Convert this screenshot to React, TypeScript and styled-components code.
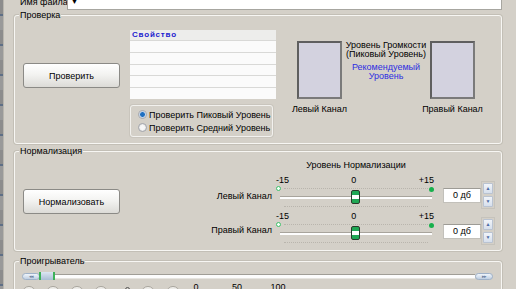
import { createGlobalStyle, styled } from "styled-components";

// base
const GlobalStyle = createGlobalStyle`
  html, body {
    margin: 0;
    padding: 0;
    background: #d4d0c8;
    overflow: hidden;
  }
  body {
    font-family: "Liberation Sans", Arial, sans-serif;
    font-size: 9px;
    color: #000;
  }
`;

const Window = styled.div`
  width: 516px;
  height: 289px;
  overflow: hidden;
  display: flex;
  background: #d4d0c8;
`;

const EdgeStrip = styled.div`
  width: 3px;
  flex: none;
  background: repeating-linear-gradient(
    180deg,
    #8c8c8c 0px,
    #8c8c8c 14px,
    #5f6f86 14px,
    #5f6f86 16px,
    #9a9a9a 16px,
    #9a9a9a 30px
  );
  border-right: 1px solid #b9b6ae;
`;

const Main = styled.div`
  flex: 1;
  display: flex;
  flex-direction: column;
`;

// file name row
const FileRow = styled.div`
  flex: none;
  display: flex;
  align-items: center;
  height: 16px;
  margin-top: -6px;
  padding-left: 16px;
`;

const FileLabel = styled.span`
  width: 47px;
  white-space: nowrap;
`;

const FileInput = styled.div`
  width: 435px;
  height: 15px;
  box-sizing: border-box;
  background: #fff;
  border: 1px solid #a7a6a0;
  border-top: none;
  display: flex;
  align-items: center;
  padding-left: 3px;
  font-size: 7px;
`;

// group box
const Group = styled.div<{ $h: number; $mt: number }>`
  flex: none;
  position: relative;
  box-sizing: border-box;
  height: ${(p) => p.$h}px;
  margin: ${(p) => p.$mt}px 14px 0 10px;
  border: 1px solid #f7f6f3;
  border-radius: 3px;
  box-shadow: 0 0 0 1px #c3bfb6;
  display: flex;
  align-items: flex-start;
`;

const Legend = styled.span`
  position: absolute;
  top: -7px;
  left: 4px;
  padding: 0 1px;
  background: #d4d0c8;
  line-height: 13px;
  white-space: nowrap;
`;

const XpButton = styled.div<{ $mt: number }>`
  flex: none;
  box-sizing: border-box;
  width: 97px;
  height: 25px;
  margin: ${(p) => p.$mt}px 0 0 8px;
  border: 1px solid #8b8a86;
  border-radius: 3px;
  background: linear-gradient(180deg, #ffffff 0%, #f3f3f1 45%, #dcdbd7 100%);
  display: flex;
  align-items: center;
  justify-content: center;
`;

// property list
const ListCol = styled.div`
  flex: none;
  width: 146px;
  margin: 14px 0 0 10px;
  display: flex;
  flex-direction: column;
`;

const PropTable = styled.div`
  height: 69px;
  display: grid;
  grid-template-rows: 10px repeat(5, 1fr);
  row-gap: 1px;
  background: #d9d9d7;
`;

const PropHeader = styled.div`
  background: #ededeb;
  color: #1c1ccf;
  font-weight: bold;
  font-size: 8px;
  letter-spacing: 0.8px;
  line-height: 10px;
  padding-left: 2px;
`;

const PropRow = styled.div`
  background: #fbfbfb;
`;

const RadioBox = styled.div`
  box-sizing: border-box;
  width: 143px;
  height: 32px;
  margin-top: 6px;
  border: 1px solid #f2f1ee;
  border-radius: 3px;
  box-shadow: 0 0 0 1px #c9c5bd;
  display: flex;
  flex-direction: column;
  justify-content: center;
  gap: 1px;
  padding-left: 7px;
`;

const RadioLine = styled.div`
  display: flex;
  align-items: center;
  gap: 2px;
  line-height: 12px;
  white-space: nowrap;
`;

const RadioDot = styled.span<{ $on?: boolean }>`
  flex: none;
  width: 9px;
  height: 9px;
  box-sizing: border-box;
  border-radius: 50%;
  border: 1px solid #a3a6ad;
  background: ${(p) =>
    p.$on
      ? "radial-gradient(circle, #1f6fc0 0 2px, #8fb6e3 2.5px, #eef1f5 3.5px)"
      : "radial-gradient(circle, #f7f7f7 0 2px, #dcdcdc 4px)"};
`;

// meters
const MeterArea = styled.div`
  flex: none;
  margin: 25px 0 0 21px;
  display: grid;
  grid-template-columns: 45px 88px 45px;
`;

const MeterCol = styled.div`
  display: flex;
  flex-direction: column;
  align-items: center;
  gap: 4px;
`;

const MeterBox = styled.div`
  width: 45px;
  height: 58px;
  box-sizing: border-box;
  border: 2px solid #5f5f5f;
  border-right-color: #7a7a7a;
  border-bottom-color: #7a7a7a;
  background: #d3d2df;
`;

const ChannelCaption = styled.span`
  white-space: nowrap;
  line-height: 13px;
`;

const CenterText = styled.div`
  display: flex;
  flex-direction: column;
  align-items: center;
  line-height: 9px;
  white-space: nowrap;
`;

const Blue = styled.div`
  color: #2d2ee0;
  display: flex;
  flex-direction: column;
  align-items: center;
  margin-top: 4px;
`;

// normalization
const LabelCol = styled.div`
  flex: none;
  width: 152px;
  margin-top: 38px;
  display: flex;
  flex-direction: column;
  align-items: flex-end;
  gap: 21px;
  line-height: 13px;
`;

const SliderCol = styled.div`
  flex: none;
  width: 160px;
  margin: 7px 0 0 4px;
  display: flex;
  flex-direction: column;
`;

const SliderTitle = styled.div`
  text-align: center;
  line-height: 13px;
  margin-bottom: 2px;
  white-space: nowrap;
`;

const ScaleRow = styled.div`
  display: flex;
  justify-content: space-between;
  width: 158px;
  line-height: 12px;
  height: 12px;
`;

const SliderBody = styled.div`
  position: relative;
  height: 24px;
`;

const TickLine = styled.div<{ $top: number }>`
  margin: ${(p) => p.$top}px 8px 0 8px;
  height: 0;
  border-top: 1px dotted #b9b5ad;
`;

const Track = styled.div`
  margin: 7px 4px 0 4px;
  height: 2px;
  background: #fdfdfd;
  border-top: 1px solid #a8a49c;
`;

const MarkHollow = styled.span`
  position: absolute;
  left: 0;
  top: 0;
  width: 5px;
  height: 5px;
  box-sizing: border-box;
  border-radius: 50%;
  border: 1px solid #3fbf6a;
  background: #f4fff6;
`;

const MarkFilled = styled.span`
  position: absolute;
  right: 2px;
  top: 1px;
  width: 5px;
  height: 5px;
  border-radius: 50%;
  background: #17b04c;
`;

const Thumb = styled.span`
  position: absolute;
  left: 75px;
  top: 4px;
  width: 9px;
  height: 14px;
  box-sizing: border-box;
  border: 1px solid #2a3a2c;
  border-radius: 2px;
  background: linear-gradient(
    180deg,
    #20a855 0 4px,
    #ffffff 4px 8px,
    #20a855 8px
  );
`;

const SpinCol = styled.div`
  flex: none;
  margin: 31px 0 0 7px;
  display: flex;
  flex-direction: column;
  gap: 12px;
`;

const Spin = styled.div`
  display: flex;
  align-items: center;
  height: 24px;
`;

const SpinInput = styled.div`
  width: 38px;
  height: 15px;
  box-sizing: border-box;
  background: #fff;
  border: 1px solid #c2c0ba;
  border-top-color: #9d9b95;
  display: flex;
  align-items: center;
  justify-content: center;
  line-height: 13px;
`;

const SpinButtons = styled.div`
  margin-left: 0;
  padding: 1px;
  border: 1px solid #c6c3bc;
  display: flex;
  flex-direction: column;
  gap: 2px;
`;

const SpinBtn = styled.span`
  width: 8px;
  height: 9px;
  border: 1px solid #b9c3d2;
  border-radius: 1px;
  background: linear-gradient(180deg, #f1f4f9, #d6dfec);
  color: #4f6ba5;
  font-size: 5px;
  line-height: 9px;
  text-align: center;
`;

// player
const SeekRow = styled.div`
  display: flex;
  align-items: center;
  height: 8px;
  margin: 10px 8px 0 7px;
`;

const Pill = styled.span`
  flex: none;
  width: 18px;
  height: 7px;
  box-sizing: border-box;
  border: 1px solid #9fb2c9;
  border-radius: 4px;
  background: linear-gradient(180deg, #f0f5fb, #bfcfe2);
  color: #6a7f9e;
  font-size: 5px;
  line-height: 5px;
  text-align: center;
  letter-spacing: -1px;
`;

const SeekTrack = styled.div`
  flex: 1;
  height: 5px;
  box-sizing: border-box;
  background: #fcfcfc;
  border-top: 1px solid #a09d96;
  border-bottom: 1px solid #e6e4df;
  display: flex;
  align-items: center;
`;

const SeekThumb = styled.span`
  width: 16px;
  height: 8px;
  margin-left: -1px;
  box-sizing: border-box;
  border-left: 2px solid #3db25a;
  border-right: 2px solid #3db25a;
  background: linear-gradient(180deg, #dbe6f2, #a9bdd4);
`;

const PlayerBody = styled.div`
  display: flex;
  flex-direction: column;
  width: 100%;
`;

const BottomRow = styled.div`
  display: flex;
  align-items: flex-start;
  margin: 1px 0 0 7px;
`;

const RoundBtn = styled.span<{ $ml: number }>`
  flex: none;
  width: 14px;
  height: 14px;
  margin: 5px 0 0 ${(p) => p.$ml}px;
  box-sizing: border-box;
  border-radius: 50%;
  border: 1px solid #a8a59e;
  background: linear-gradient(180deg, #f2f1ee, #cfcbc3);
`;

const SmallMark = styled.span`
  width: 3px;
  height: 3px;
  margin: 6px 0 0 17px;
  border-radius: 50%;
  border: 1px solid #555;
`;

const VolNum = styled.span<{ $ml: number }>`
  width: 20px;
  margin-left: ${(p) => p.$ml}px;
  text-align: center;
  line-height: 12px;
`;

const TimeText = styled.span`
  margin: 5px 29px 0 auto;
  color: #1f1fd6;
  letter-spacing: 0.7px;
  line-height: 12px;
`;

function Slider() {
  return (
    <>
      <ScaleRow>
        <span>-15</span>
        <span>0</span>
        <span>+15</span>
      </ScaleRow>
      <SliderBody>
        <MarkHollow />
        <MarkFilled />
        <TickLine $top={2} />
        <Track />
        <TickLine $top={7} />
        <Thumb />
      </SliderBody>
    </>
  );
}

function SpinBox() {
  return (
    <Spin>
      <SpinInput>0 дб</SpinInput>
      <SpinButtons>
        <SpinBtn>▲</SpinBtn>
        <SpinBtn>▼</SpinBtn>
      </SpinButtons>
    </Spin>
  );
}

export default function App() {
  return (
    <Window>
      <GlobalStyle />
      <EdgeStrip />
      <Main>
        <FileRow>
          <FileLabel>Имя файла:</FileLabel>
          <FileInput>▼</FileInput>
        </FileRow>

        <Group $h={129} $mt={5}>
          <Legend>Проверка</Legend>
          <XpButton $mt={47}>Проверить</XpButton>
          <ListCol>
            <PropTable>
              <PropHeader>Свойство</PropHeader>
              <PropRow />
              <PropRow />
              <PropRow />
              <PropRow />
              <PropRow />
            </PropTable>
            <RadioBox>
              <RadioLine>
                <RadioDot $on />
                Проверить Пиковый Уровень
              </RadioLine>
              <RadioLine>
                <RadioDot />
                Проверить Средний Уровень
              </RadioLine>
            </RadioBox>
          </ListCol>
          <MeterArea>
            <MeterCol>
              <MeterBox />
              <ChannelCaption>Левый Канал</ChannelCaption>
            </MeterCol>
            <CenterText>
              <span>Уровень Громкости</span>
              <span>(Пиковый Уровень)</span>
              <Blue>
                <span>Рекомендуемый</span>
                <span>Уровень</span>
              </Blue>
            </CenterText>
            <MeterCol>
              <MeterBox />
              <ChannelCaption>Правый Канал</ChannelCaption>
            </MeterCol>
          </MeterArea>
        </Group>

        <Group $h={100} $mt={7}>
          <Legend>Нормализация</Legend>
          <XpButton $mt={37}>Нормализовать</XpButton>
          <LabelCol>
            <span>Левый Канал</span>
            <span>Правый Канал</span>
          </LabelCol>
          <SliderCol>
            <SliderTitle>Уровень Нормализации</SliderTitle>
            <Slider />
            <Slider />
          </SliderCol>
          <SpinCol>
            <SpinBox />
            <SpinBox />
          </SpinCol>
        </Group>

        <Group $h={40} $mt={10}>
          <Legend>Проигрыватель</Legend>
          <PlayerBody>
            <SeekRow>
              <Pill>◂◂</Pill>
              <SeekTrack>
                <SeekThumb />
              </SeekTrack>
              <Pill>▸▸</Pill>
            </SeekRow>
            <BottomRow>
              <RoundBtn $ml={0} />
              <RoundBtn $ml={10} />
              <RoundBtn $ml={10} />
              <RoundBtn $ml={10} />
              <SmallMark />
              <RoundBtn $ml={11} />
              <RoundBtn $ml={11} />
              <VolNum $ml={6}>0</VolNum>
              <VolNum $ml={21}>50</VolNum>
              <VolNum $ml={21}>100</VolNum>
              <TimeText>000:00:00</TimeText>
            </BottomRow>
          </PlayerBody>
        </Group>
      </Main>
    </Window>
  );
}
